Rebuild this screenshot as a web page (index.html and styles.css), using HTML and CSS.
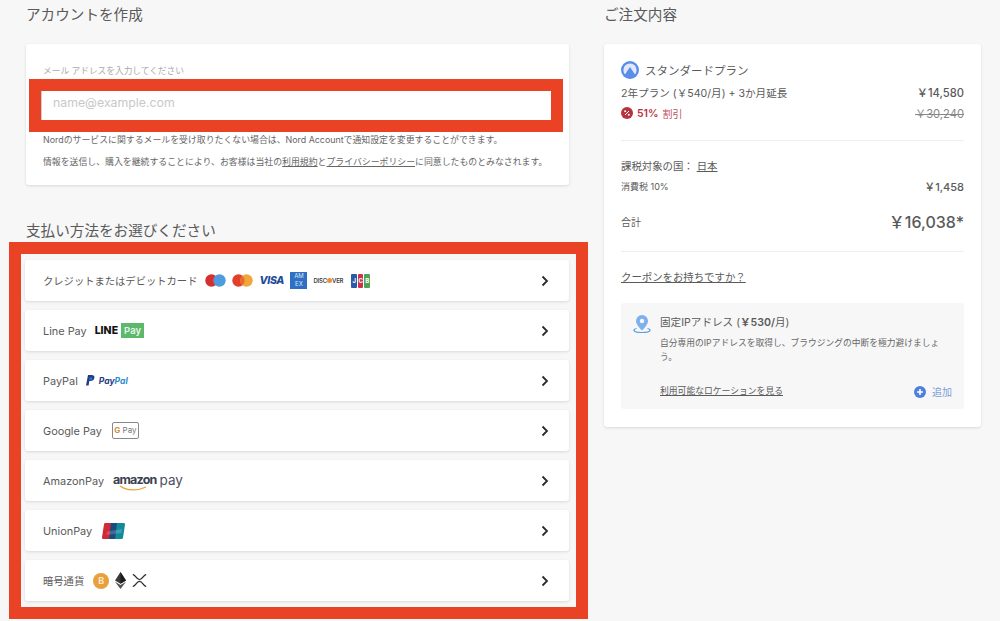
FILE: index.html
```html
<!DOCTYPE html>
<html lang="ja">

<head>
    <meta charset="UTF-8">
    <title>ご注文内容</title>
    <link rel="stylesheet" href="styles.css">
</head>

<body>
    <div class="page">
        <div class="left">
            <h2 class="title title_left">アカウントを作成</h2>
            <div class="card account">
                <div class="email_label">メール アドレスを入力してください</div>
                <div class="mark">
                    <input class="email" type="text" placeholder="name@example.com">
                </div>
                <p class="note">Nordのサービスに関するメールを受け取りたくない場合は、Nord Accountで通知設定を変更することができます。</p>
                <p class="note note_last">情報を送信し、購入を継続することにより、お客様は当社の<a href="#">利用規約</a>と<a href="#">プライバシーポリシー</a>に同意したものとみなされます。</p>
            </div>
            <h2 class="title title_left title_pay">支払い方法をお選びください</h2>
            <div class="pay_frame">
                <div class="pay_row">
                    <span class="pay_name">クレジットまたはデビットカード</span>
                    <div class="logos logos_card">
                        <svg width="21" height="13" viewBox="0 0 21 13"><circle cx="6.5" cy="6.5" r="6.2" fill="#d5302f"/><circle cx="14.5" cy="6.5" r="6.2" fill="#4f9bdf"/></svg>
                        <svg width="21" height="13" viewBox="0 0 21 13"><circle cx="6.5" cy="6.5" r="6.2" fill="#e2402b"/><circle cx="14.5" cy="6.5" r="6.2" fill="#f0a63c"/><path d="M10.5 1.8a6.2 6.2 0 0 1 0 9.4a6.2 6.2 0 0 1 0-9.4z" fill="#ea6a2e"/></svg>
                        <span class="visa">VISA</span>
                        <span class="amex">AM<br>EX</span>
                        <span class="discover">DISC<i class="disc_dot"></i>VER</span>
                        <span class="jcb"><b class="jcb_b">J</b><b class="jcb_r">C</b><b class="jcb_g">B</b></span>
                    </div>
                    <svg class="chevron" width="8" height="12" viewBox="0 0 8 12"><path d="M1.5 1.5L6 6l-4.5 4.5" fill="none" stroke="#2b2b2b" stroke-width="1.8"/></svg>
                </div>
                <div class="pay_row">
                    <span class="pay_name pay_latin">Line Pay</span>
                    <div class="logos logos_line">
                        <span class="line_word">LINE</span>
                        <span class="line_pay">Pay</span>
                    </div>
                    <svg class="chevron" width="8" height="12" viewBox="0 0 8 12"><path d="M1.5 1.5L6 6l-4.5 4.5" fill="none" stroke="#2b2b2b" stroke-width="1.8"/></svg>
                </div>
                <div class="pay_row">
                    <span class="pay_name pay_latin">PayPal</span>
                    <div class="logos logos_paypal">
                        <svg width="9" height="11" viewBox="0 0 9 11"><path d="M2 0h3.6c2 0 3.1 1 2.8 2.8C8 5 6.600 6 4.600 6H3.300L2.600 10.600H0z" fill="#253b80"/><path d="M3.400 2.200h1.900c1 0 1.500.6 1.300 1.500-.2 1-1 1.500-2 1.500H3z" fill="#1f6fc4"/></svg>
                        <span class="paypal_word"><b class="pp_dark">Pay</b><b class="pp_light">Pal</b></span>
                    </div>
                    <svg class="chevron" width="8" height="12" viewBox="0 0 8 12"><path d="M1.5 1.5L6 6l-4.5 4.5" fill="none" stroke="#2b2b2b" stroke-width="1.8"/></svg>
                </div>
                <div class="pay_row">
                    <span class="pay_name pay_latin">Google Pay</span>
                    <div class="logos logos_google">
                        <span class="gpay_box"><b class="gpay_g">G</b> Pay</span>
                    </div>
                    <svg class="chevron" width="8" height="12" viewBox="0 0 8 12"><path d="M1.5 1.5L6 6l-4.5 4.5" fill="none" stroke="#2b2b2b" stroke-width="1.8"/></svg>
                </div>
                <div class="pay_row">
                    <span class="pay_name pay_latin">AmazonPay</span>
                    <div class="logos logos_amazon">
                        <span class="amazon_word">amazon</span>
                        <span class="amazon_pay">pay</span>
                        <svg class="amazon_smile" width="30" height="6" viewBox="0 0 30 6"><path d="M1 1c7 5 18 5 26 1" fill="none" stroke="#e8a33d" stroke-width="1.200"/></svg>
                    </div>
                    <svg class="chevron" width="8" height="12" viewBox="0 0 8 12"><path d="M1.5 1.5L6 6l-4.5 4.5" fill="none" stroke="#2b2b2b" stroke-width="1.8"/></svg>
                </div>
                <div class="pay_row">
                    <span class="pay_name pay_latin">UnionPay</span>
                    <div class="logos logos_union">
                        <svg width="23" height="16" viewBox="0 0 23 16"><path d="M3 0h7L8 16H1.500a1.500 1.500 0 0 1-1.500-1.700L2 1.200A1.500 1.500 0 0 1 3 0z" fill="#d02a36"/><path d="M9 0h7l-2 16H7z" fill="#1a4a7e"/><path d="M15 0h6.500A1.500 1.500 0 0 1 23 1.700l-2 13A1.500 1.500 0 0 1 19.500 16H13z" fill="#138a9c"/><path d="M5 8.500l15-2.500-.6 4-14.900 2z" fill="#fff" opacity=".18"/></svg>
                    </div>
                    <svg class="chevron" width="8" height="12" viewBox="0 0 8 12"><path d="M1.5 1.5L6 6l-4.5 4.5" fill="none" stroke="#2b2b2b" stroke-width="1.8"/></svg>
                </div>
                <div class="pay_row">
                    <span class="pay_name">暗号通貨</span>
                    <div class="logos logos_crypto">
                        <span class="btc">B</span>
                        <svg width="11" height="17" viewBox="0 0 11 17"><path d="M5.500 0L0 8.500l5.500 3.200 5.500-3.200z" fill="#3a3a3a"/><path d="M5.500 0v11.700l5.500-3.200z" fill="#1c1c1c"/><path d="M0 9.800L5.500 17l5.500-7.200-5.500 3.200z" fill="#555"/></svg>
                        <svg width="15" height="13" viewBox="0 0 15 13"><path d="M.8.600c2.600 0 3.600 5 6.700 5s4.100-5 6.700-5M.8 12.400c2.600 0 3.600-5 6.700-5s4.100 5 6.700 5" fill="none" stroke="#2a2a2a" stroke-width="1.300"/></svg>
                    </div>
                    <svg class="chevron" width="8" height="12" viewBox="0 0 8 12"><path d="M1.5 1.5L6 6l-4.500 4.500" fill="none" stroke="#2b2b2b" stroke-width="1.8"/></svg>
                </div>
            </div>
        </div>

        <div class="right">
            <h2 class="title">ご注文内容</h2>
            <div class="card order">
                <div class="plan_head">
                    <svg width="18" height="18" viewBox="0 0 18 18"><circle cx="9" cy="9" r="9" fill="#5a8cea"/><circle cx="9" cy="9" r="6.600" fill="#dfe9fb"/><path d="M3 15l6-9 6 9a9 9 0 0 1-12 0z" fill="#5a8cea"/></svg>
                    <span>スタンダードプラン</span>
                </div>
                <div class="line line_plan">
                    <span>2年プラン (￥540/月) + 3か月延長</span>
                    <span class="price">￥14,580</span>
                </div>
                <div class="line line_discount">
                    <span class="discount">
                        <svg width="12" height="12" viewBox="0 0 12 12"><circle cx="6" cy="6" r="6" fill="#b8323e"/><path d="M4 8l4-4" stroke="#fff" stroke-width="1"/><circle cx="4.200" cy="4.200" r="1" fill="#fff"/><circle cx="7.800" cy="7.800" r="1" fill="#fff"/></svg>
                        <b>51%</b> <span class="discount_word">割引</span>
                    </span>
                    <s class="old_price">￥30,240</s>
                </div>
                <hr class="rule rule_one">
                <div class="tax_country">課税対象の国： <a href="#">日本</a></div>
                <div class="line line_tax">
                    <span class="tax_name">消費税 10%</span>
                    <span class="tax_price">￥1,458</span>
                </div>
                <div class="line line_total">
                    <span class="total_name">合計</span>
                    <span class="total_price">￥16,038*</span>
                </div>
                <hr class="rule rule_two">
                <a class="coupon" href="#">クーポンをお持ちですか？</a>
                <div class="ip_box">
                    <svg class="ip_icon" width="18" height="18" viewBox="0 0 18 18"><path d="M3.500 13.500C1.500 14 .8 14.800 1 15.500c.4 1.300 4 2 8 2s7.600-.7 8-2c.2-.7-.5-1.500-2.500-2" fill="none" stroke="#5f9be6" stroke-width="1.200"/><path d="M9 0a6 6 0 0 0-6 6c0 3.500 4 7.500 6 9.500 2-2 6-6 6-9.500a6 6 0 0 0-6-6z" fill="#7db1ee"/><circle cx="9" cy="6" r="2.200" fill="#f7f7f7"/></svg>
                    <div class="ip_body">
                        <div class="ip_title">固定IPアドレス (<b>￥530/</b>月)</div>
                        <p class="ip_text">自分専用のIPアドレスを取得し、ブラウジングの中断を極力避けましょう。</p>
                        <div class="ip_foot">
                            <a href="#">利用可能なロケーションを見る</a>
                            <span class="add">
                                <svg width="12" height="12" viewBox="0 0 12 12"><circle cx="6" cy="6" r="6" fill="#4f7fdc"/><path d="M6 3v6M3 6h6" stroke="#fff" stroke-width="1.600"/></svg>
                                追加
                            </span>
                        </div>
                    </div>
                </div>
            </div>
        </div>
    </div>
</body>

</html>
```

FILE: styles.css
```css
* {
    box-sizing: border-box;
}

html,
body {
    margin: 0;
    height: 621px;
    overflow: hidden;
}

body {
    background: #f7f7f7;
    color: #5a5a5a;
    font-family: "Inter", "Noto Sans CJK JP", sans-serif;
}

a {
    color: inherit;
}

p {
    margin: 0;
}

.page {
    display: grid;
    grid-template-columns: 579px 377px;
    gap: 16px;
    padding-left: 9px;
}

.title {
    margin: 0;
    height: 30px;
    font-size: 14.6px;
    line-height: 30px;
    font-weight: 400;
    color: #5a5a5a;
}

.title_left {
    padding-left: 17px;
}

.title_pay {
    margin-top: 35px;
    height: 22px;
    line-height: 22px;
}

.card {
    background: #fff;
    border-radius: 3px;
    box-shadow: 0 1px 3px rgba(0, 0, 0, .12);
}

/* アカウント */
.account {
    margin: 14px 19px 0 17px;
    height: 141px;
    padding: 20px 6px 0 3px;
}

.email_label {
    padding-left: 14px;
    height: 15px;
    font-size: 8.7px;
    line-height: 15px;
    color: #aaa;
}

.mark {
    padding: 12px;
    background: #e94225;
}

.email {
    display: block;
    width: 100%;
    height: 29px;
    padding: 0 0 6px 11px;
    border: 0;
    border-left: 1px solid #ccc;
    background: #fff;
    font-family: inherit;
    font-size: 12.3px;
}

.email::placeholder {
    color: #c8c8c8;
}

.note {
    margin-top: 0;
    padding: 1px 0 0 14px;
    font-size: 8.9px;
    line-height: 13px;
    color: #666;
}

.note_last {
    margin-top: 8px;
}

/* 支払い方法 */
.pay_frame {
    display: flex;
    flex-direction: column;
    gap: 9px;
    height: 377px;
    padding: 6px 7px 6px 4px;
    border: 12px solid #e94225;
}

.pay_row {
    display: flex;
    align-items: center;
    height: 41px;
    padding: 0 20px 0 18px;
    background: #fff;
    border-radius: 3px;
    box-shadow: 0 1px 3px rgba(0, 0, 0, .12);
}

.pay_name {
    font-size: 10.3px;
    color: #5a5a5a;
}

.pay_latin {
    font-size: 10.9px;
}

.chevron {
    margin-left: auto;
}

.logos {
    display: flex;
    align-items: center;
}

.logos_card {
    margin-left: 8px;
    gap: 6px;
}

.visa {
    width: 25px;
    color: #1f4a9c;
    font-size: 10.5px;
    font-weight: 800;
    font-style: italic;
    letter-spacing: -.3px;
}

.amex {
    display: block;
    width: 17px;
    height: 17px;
    background: #2f6fc4;
    color: #dce8f7;
    font-size: 6px;
    line-height: 7.500px;
    text-align: center;
}

.discover {
    display: flex;
    align-items: center;
    width: 32px;
    color: #444;
    font-size: 6px;
    font-weight: 600;
    letter-spacing: -.2px;
}

.disc_dot {
    width: 5px;
    height: 5px;
    border-radius: 50%;
    background: #e8923a;
}

.jcb {
    display: flex;
    gap: 1px;
}

.jcb b {
    width: 5.500px;
    height: 14px;
    border-radius: 1px;
    color: #fff;
    font-size: 6px;
    line-height: 14px;
    text-align: center;
}

.jcb_b {
    background: #2a5aa8;
}

.jcb_r {
    background: #c9344a;
}

.jcb_g {
    background: #4ca35a;
}

.logos_line {
    margin-left: 8px;
    gap: 3px;
}

.line_word {
    color: #111;
    font-size: 10.500px;
    font-weight: 800;
}

.line_pay {
    width: 23px;
    height: 15px;
    background: #5cb86a;
    color: #e8f6ea;
    font-size: 9.500px;
    font-weight: 600;
    line-height: 15px;
    text-align: center;
}

.logos_paypal {
    margin-left: 8px;
    gap: 4px;
}

.paypal_word {
    font-size: 8.500px;
    font-style: italic;
}

.pp_dark {
    color: #253b80;
}

.pp_light {
    color: #2d8ccc;
}

.logos_google {
    margin-left: 10px;
}

.gpay_box {
    width: 27px;
    height: 17px;
    border: 1px solid #888;
    border-radius: 2px;
    color: #777;
    font-size: 8px;
    line-height: 15px;
    text-align: center;
}

.gpay_g {
    color: #d08a3c;
}

.logos_amazon {
    position: relative;
    top: -1px;
    margin-left: 9px;
    gap: 3px;
}

.amazon_word {
    color: #3a4150;
    font-size: 12.500px;
    font-weight: 700;
    letter-spacing: -.8px;
    line-height: 16px;
}

.amazon_pay {
    color: #4a5060;
    font-size: 13.500px;
    line-height: 16px;
}

/* 文字の下に重ねるロゴの弧 */
.amazon_smile {
    position: absolute;
    left: 6px;
    top: 13px;
}

.logos_union {
    margin-left: 10px;
}

.logos_crypto {
    margin-left: 9px;
    gap: 6px;
}

.btc {
    width: 16px;
    height: 16px;
    border-radius: 50%;
    background: #e8a03c;
    color: #fbe9cf;
    font-size: 9px;
    font-weight: 700;
    line-height: 16px;
    text-align: center;
}

/* ご注文内容 */
.order {
    margin-top: 14px;
    height: 383px;
    padding: 17px 17px 0;
}

.plan_head {
    display: flex;
    align-items: center;
    gap: 6px;
    height: 18px;
    font-size: 11.500px;
}

.line {
    display: flex;
    align-items: center;
    justify-content: space-between;
}

.line_plan {
    margin-top: 5px;
    height: 16px;
    font-size: 10.600px;
}

.price {
    font-size: 11.200px;
    font-weight: 500;
}

.line_discount {
    margin-top: 5px;
    height: 16px;
    font-size: 10.500px;
}

.discount {
    display: flex;
    align-items: center;
    gap: 4px;
    color: #c0505c;
}

.discount b {
    font-weight: 600;
    color: #b8323e;
}

.discount_word {
    font-size: 10px;
}

.old_price {
    font-size: 11.200px;
    color: #888;
}

.rule {
    margin: 0;
    border: 0;
    border-top: 1px solid #eee;
}

.rule_one {
    margin-top: 19px;
}

.tax_country {
    margin-top: 18px;
    height: 16px;
    font-size: 10.400px;
    line-height: 16px;
}

.line_tax {
    margin-top: 3px;
    height: 16px;
}

.tax_name {
    font-size: 9px;
}

.tax_price {
    font-size: 11px;
    font-weight: 500;
}

.line_total {
    margin-top: 15px;
    height: 24px;
}

.total_name {
    font-size: 10px;
}

.total_price {
    font-size: 16px;
    font-weight: 500;
}

.rule_two {
    margin-top: 18px;
}

.coupon {
    display: block;
    margin-top: 17px;
    height: 18px;
    font-size: 10.400px;
    line-height: 18px;
}

.ip_box {
    display: flex;
    gap: 9px;
    margin-top: 16px;
    height: 106px;
    padding: 12px 12px 0 12px;
    background: #f7f7f7;
    border-radius: 3px;
}

.ip_icon {
    flex: none;
}

.ip_body {
    flex: 1;
}

.ip_title {
    font-size: 10.600px;
    line-height: 16px;
}

.ip_title b {
    font-weight: 600;
}

.ip_text {
    margin-top: 5px;
    font-size: 8.750px;
    line-height: 14px;
    color: #666;
}

.ip_foot {
    display: flex;
    justify-content: space-between;
    align-items: flex-start;
    margin-top: 20px;
    font-size: 8.800px;
    line-height: 14px;
}

.add {
    display: flex;
    align-items: center;
    gap: 6px;
    margin-top: 1px;
    color: #7c9cd8;
    font-size: 10px;
}
```
